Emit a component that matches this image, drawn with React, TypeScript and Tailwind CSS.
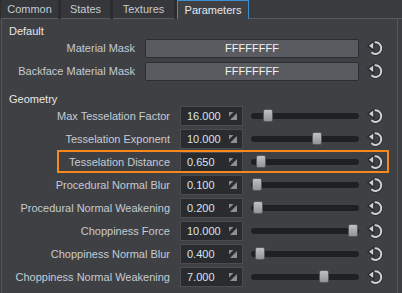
import React from 'react'

type Param = { name: string; value: string; pos: number; highlight?: boolean }

const geometry: Param[] = [
  { name: 'Max Tesselation Factor', value: '16.000', pos: 0.12 },
  { name: 'Tesselation Exponent', value: '10.000', pos: 0.62 },
  { name: 'Tesselation Distance', value: '0.650', pos: 0.05, highlight: true },
  { name: 'Procedural Normal Blur', value: '0.100', pos: 0.01 },
  { name: 'Procedural Normal Weakening', value: '0.200', pos: 0.02 },
  { name: 'Choppiness Force', value: '10.000', pos: 0.99 },
  { name: 'Choppiness Normal Blur', value: '0.400', pos: 0.04 },
  { name: 'Choppiness Normal Weakening', value: '7.000', pos: 0.69 },
]

const tabs = ['Common', 'States', 'Textures', 'Parameters']

const ResetIcon = () => (
  <svg width="17" height="16" viewBox="0 0 17 16" className="shrink-0">
    <path d="M7.6 2.4 A5.8 5.8 0 1 1 4.4 12.3" fill="none" stroke="#2a2b2e" strokeWidth="3.6" />
    <path d="M0.8 5.8 L6.8 1.2 L6.8 10.4 Z" fill="#2a2b2e" stroke="#2a2b2e" strokeWidth="1.4" strokeLinejoin="round" />
    <path d="M7.6 2.4 A5.8 5.8 0 1 1 4.4 12.3" fill="none" stroke="#cfd0d2" strokeWidth="1.9" />
    <path d="M2 5.8 L6.2 2.6 L6.2 9 Z" fill="#cfd0d2" />
  </svg>
)

const ExpandIcon = () => (
  <svg width="8" height="8" viewBox="0 0 8 8" className="shrink-0">
    <path d="M8 1 L8 8 L1 8 Z" fill="#8e8f92" />
    <path d="M0 0 L4.5 0 L0 4.5 Z" fill="#8e8f92" />
  </svg>
)

const Slider = ({ pos }: { pos: number }) => (
  <div className="relative ml-[8px] h-[20px] w-[108px] shrink-0">
    <div className="absolute left-0 right-0 top-[7px] h-[6px] rounded-full bg-[#1f2022]" />
    <div
      className="absolute top-[3px] h-[13px] w-[10px] rounded-[2px] border border-[#58595c] bg-gradient-to-b from-[#c0c1c3] to-[#939497]"
      style={{ left: `${pos * 98}px` }}
    />
  </div>
)

export default function App() {
  return (
    <div className="h-[293px] w-[402px] overflow-hidden bg-[#3d3e42] font-['Liberation_Sans',sans-serif] text-[11px] text-[#c5cbd3]">
      {/* tab bar */}
      <div className="flex h-[19px] items-stretch bg-[#2c2d30] pl-[1px]">
        {tabs.map((tab, i) =>
          tab === 'Parameters' ? (
            <div
              key={tab}
              className="ml-[3px] flex w-[72px] items-center justify-center border-x border-t border-[#3d8fd1] bg-[#3f4044] text-[#e4e8ee]"
            >
              {tab}
            </div>
          ) : (
            <div
              key={tab}
              className={`flex items-center justify-center border-b border-[#5a5b5f] bg-[#36373b] ${
                i === 0 ? 'w-[57px]' : i === 1 ? 'ml-[3px] w-[49px]' : 'ml-[3px] w-[61px]'
              }`}
            >
              {tab}
            </div>
          )
        )}
        <div className="flex-1 border-b border-[#5a5b5f] bg-[#3a3b3f]" />
      </div>

      {/* panel */}
      <div className="ml-[1px] h-[274px] w-[397px] border-x border-[#56575b] bg-[#3f4044]">
        <div className="pl-[7px] pt-[6px] leading-[13px] text-[#e6e6e6]">Default</div>
        <div className="flex flex-col gap-[3px]">
          {['Material Mask', 'Backface Material Mask'].map((name) => (
            <div key={name} className="flex h-[20px] items-center">
              <div className="w-[133px] shrink-0 text-right">{name}</div>
              <div className="ml-[10px] flex h-[19px] w-[214px] shrink-0 items-center justify-center rounded-[2px] border border-[#2c2d31] bg-[#5a5b60] text-[#f2f2f2]">
                FFFFFFFF
              </div>
              <div className="ml-[8px]">
                <ResetIcon />
              </div>
            </div>
          ))}
        </div>

        <div className="mt-[12px] pl-[7px] leading-[13px] text-[#e6e6e6]">Geometry</div>
        <div className="flex flex-col gap-[3px]">
          {geometry.map((p) => (
            <div key={p.name} className="relative flex h-[20px] items-center">
              {p.highlight && (
                <div className="absolute -top-[2px] left-[55px] h-[23px] w-[332px] border-2 border-[#f7891c]" />
              )}
              <div className="w-[168px] shrink-0 text-right">{p.name}</div>
              <div className="ml-[10px] flex h-[20px] w-[63px] shrink-0 items-center justify-between border border-[#4b4c50] bg-[#2a2b2e] pl-[6px] pr-[5px] text-[#d9e3ee]">
                <span>{p.value}</span>
                <ExpandIcon />
              </div>
              <Slider pos={p.pos} />
              <div className="ml-[8px]">
                <ResetIcon />
              </div>
            </div>
          ))}
        </div>
      </div>
    </div>
  )
}
